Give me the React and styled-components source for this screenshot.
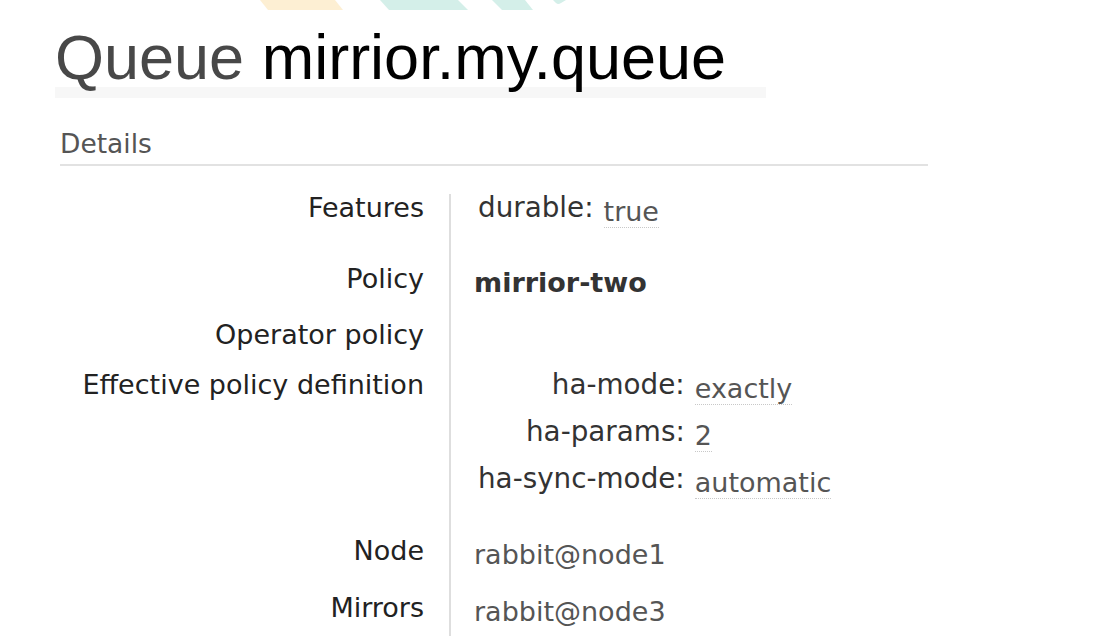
import { Fragment } from 'react';
import styled, { createGlobalStyle } from 'styled-components';

const GlobalStyle = createGlobalStyle`
  html, body {
    margin: 0;
    padding: 0;
    background: #fff;
    overflow: hidden;
  }
  body {
    font-family: "DejaVu Sans", Verdana, sans-serif;
  }
`;

const Page = styled.div`
  width: 1100px;
  height: 636px;
  overflow: hidden;
`;

const Stripes = styled.svg`
  display: block;
  width: 1100px;
  height: 10px;
`;

const Content = styled.div`
  padding-left: 55px;
`;

const Title = styled.h1`
  margin: 17px 0 0;
  font-family: "Liberation Sans", Arial, sans-serif;
  font-weight: normal;
  font-size: 63px;
  line-height: 60px;
  color: #484848;
  white-space: nowrap;

  & b {
    font-weight: normal;
    color: #000;
  }
`;

const TitleBar = styled.div`
  width: 711px;
  height: 11px;
  background: #f7f7f7;
`;

const SectionHead = styled.h2`
  margin: 30px 0 0 5px;
  width: 868px;
  padding-bottom: 4px;
  border-bottom: 2px solid #e2e2e2;
  font-size: 26.5px;
  font-weight: normal;
  line-height: 32px;
  color: #555;
`;

const Facts = styled.table`
  margin-top: 28px;
  border-collapse: collapse;
  font-size: 27px;
  line-height: 28px;
`;

const Row = styled.tr`
  & > th,
  & > td {
    height: ${(p) => p.$h}px;
    vertical-align: top;
    padding-top: 0;
    padding-bottom: 0;
  }
`;

const Label = styled.th`
  width: 369px;
  padding: 0 25px 0 0;
  text-align: right;
  font-weight: normal;
  color: #222;
  white-space: nowrap;
`;

const Value = styled.td`
  border-left: 2px solid #dedede;
  padding-left: 23px;
  color: #555;
  white-space: nowrap;
`;

const Key = styled.span`
  margin-left: ${(p) => (p.$pad ? '4px' : '0')};
  font-size: 27.8px;
  color: #333;
`;

const Abbr = styled.span`
  display: inline-block;
  margin-left: ${(p) => (p.$inline ? '10px' : '0')};
  vertical-align: -4px;
  line-height: 26px;
  padding-bottom: 2px;
  border-bottom: 1px dotted #c8c8c8;
  color: #555;
`;

const Plain = styled.span`
  display: inline-block;
  vertical-align: -4px;
  color: ${(p) => (p.$bold ? '#333' : '#555')};
  font-weight: ${(p) => (p.$bold ? 'bold' : 'normal')};
`;

const Definition = styled.div`
  display: grid;
  grid-template-columns: auto auto;
  grid-auto-rows: 47px;
  column-gap: 10px;
  justify-content: start;
  align-items: start;
  margin-left: 4px;

  & > ${Key} {
    text-align: right;
  }
`;

const definition = [
  ['ha-mode:', 'exactly'],
  ['ha-params:', '2'],
  ['ha-sync-mode:', 'automatic'],
];

export default function App() {
  return (
    <Page>
      <GlobalStyle />
      <Stripes viewBox="0 0 1100 10">
        <polygon points="260,0 335,0 343,10 268,10" fill="#fdefd3" />
        <polygon points="380,0 458,0 468,10 389,10" fill="#d4efe9" />
        <polygon points="492,0 525,0 533,10 502,10" fill="#d4efe9" />
        <path d="M553 0 H566 L561 3 Q558 5 556 3 Z" fill="#d4efe9" />
      </Stripes>
      <Content>
        <Title>
          Queue <b>mirrior.my.queue</b>
        </Title>
        <TitleBar />
        <SectionHead>Details</SectionHead>
        <Facts>
          <tbody>
            <Row $h={71}>
              <Label>Features</Label>
              <Value>
                <Key $pad>durable:</Key>
                <Abbr $inline>true</Abbr>
              </Value>
            </Row>
            <Row $h={56}>
              <Label>Policy</Label>
              <Value>
                <Plain $bold>mirrior-two</Plain>
              </Value>
            </Row>
            <Row $h={50}>
              <Label>Operator policy</Label>
              <Value />
            </Row>
            <Row $h={166}>
              <Label>Effective policy definition</Label>
              <Value>
                <Definition>
                  {definition.map(([k, v]) => (
                    <Fragment key={k}>
                      <Key>{k}</Key>
                      <span>
                        <Abbr>{v}</Abbr>
                      </span>
                    </Fragment>
                  ))}
                </Definition>
              </Value>
            </Row>
            <Row $h={57}>
              <Label>Node</Label>
              <Value>
                <Plain>rabbit@node1</Plain>
              </Value>
            </Row>
            <Row $h={43}>
              <Label>Mirrors</Label>
              <Value>
                <Plain>rabbit@node3</Plain>
              </Value>
            </Row>
          </tbody>
        </Facts>
      </Content>
    </Page>
  );
}
